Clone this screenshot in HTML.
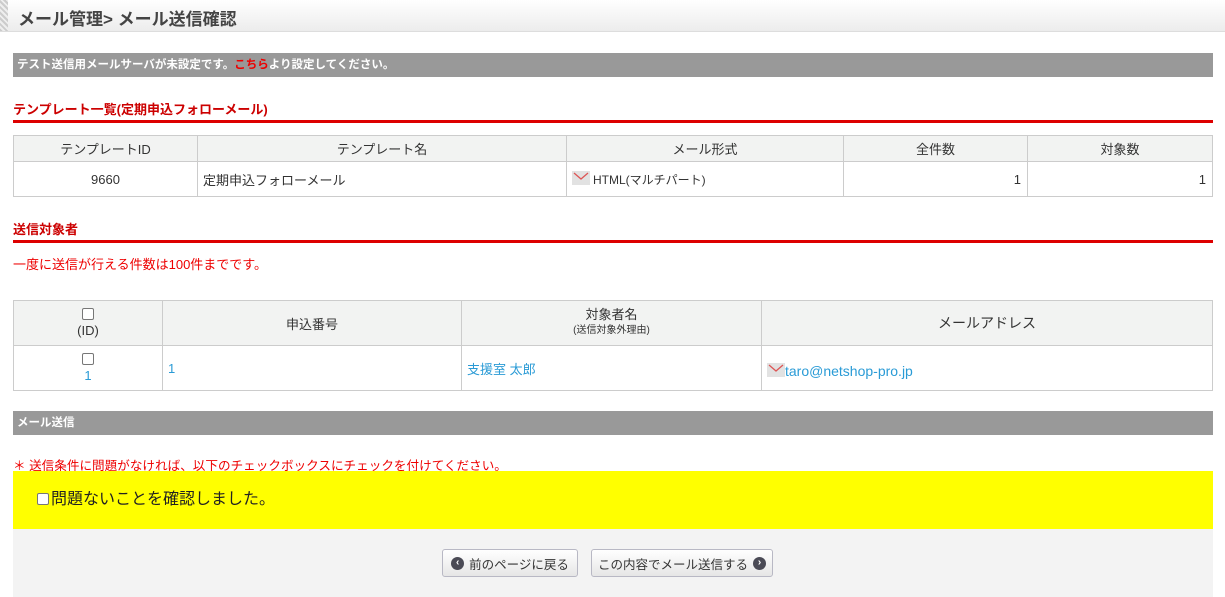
<!DOCTYPE html>
<html><head><meta charset="utf-8"><style>
*{box-sizing:border-box;margin:0;padding:0}
body{width:1225px;height:597px;overflow:hidden;background:#fff;font-family:"Liberation Sans","Noto Sans CJK JP",sans-serif;font-size:13px;color:#333;position:relative}
.hdr{position:absolute;left:0;top:0;width:1225px;height:32px;background:linear-gradient(#fff,#ececec);border-bottom:1px solid #ddd}
.hdr .strip{position:absolute;left:0;top:0;width:8px;height:31px;background:repeating-linear-gradient(45deg,#ccc 0 2px,#eee 2px 4px)}
.hdr h1{position:absolute;left:18px;top:5px;font-size:17px;font-weight:bold;color:#444;white-space:nowrap}
.bar{position:absolute;left:13px;width:1200px;height:24px;background:#999;color:#fff;font-weight:bold;font-size:11.5px;line-height:24px;padding-left:4px;white-space:nowrap}
.sec{position:absolute;left:13px;width:1200px;color:#c00;font-weight:bold;font-size:13px;border-bottom:3px solid #d00;height:24px}
table{position:absolute;left:13px;width:1200px;border-collapse:collapse}
td,th{border:1px solid #ccc;font-weight:normal;font-size:13px}
th{background:#f2f3f2;color:#333}
a{color:#2a9bd6;text-decoration:none}
.cb{display:inline-block;width:12px;height:12px;border:1px solid #777;border-radius:2px;background:#fff}
.mail{display:inline-block;width:18px;height:14px;vertical-align:-1px;margin-right:3px}
.btn{position:absolute;top:549px;height:28px;border:1px solid #b8b8c4;border-radius:3px;background:linear-gradient(#fff,#e6e6e6);font-size:12.5px;color:#333;display:flex;align-items:center;justify-content:center;gap:5px;white-space:nowrap}
.ic{display:inline-block;width:13px;height:13px;border-radius:50%;background:#4a4a55;color:#fff;font-size:10px;line-height:12px;text-align:center;font-weight:bold}
</style></head><body>
<div class="hdr"><div class="strip"></div><h1>メール管理&gt; メール送信確認</h1></div>
<div class="bar" style="top:53px">テスト送信用メールサーバが未設定です。<span style="color:#e00">こちら</span>より設定してください。</div>
<div class="sec" style="top:99px">テンプレート一覧(定期申込フォローメール)</div>
<table style="top:135px">
<tr style="height:26px"><th style="width:184px">テンプレートID</th><th style="width:369px">テンプレート名</th><th style="width:277px">メール形式</th><th style="width:184px">全件数</th><th>対象数</th></tr>
<tr style="height:35px"><td style="text-align:center">9660</td><td style="padding-left:5px">定期申込フォローメール</td><td style="padding-left:5px;font-size:12px"><svg class="mail" viewBox="0 0 18 14"><rect width="18" height="14" fill="#e2e2e2"/><path d="M2 2L9 8L16 2" stroke="#d55" stroke-width="1.3" fill="none"/></svg>HTML(マルチパート)</td><td style="text-align:right;padding-right:6px">1</td><td style="text-align:right;padding-right:6px">1</td></tr>
</table>
<div class="sec" style="top:219px">送信対象者</div>
<div style="position:absolute;left:13px;top:254px;color:#e00;font-size:13px">一度に送信が行える件数は100件までです。</div>
<table style="top:300px">
<tr style="height:45px"><th style="width:149px;line-height:15px"><span class="cb"></span><br>(ID)</th><th style="width:299px">申込番号</th><th style="width:300px;line-height:14px">対象者名<br><span style="font-size:10px">(送信対象外理由)</span></th><th style="font-size:14px">メールアドレス</th></tr>
<tr style="height:45px"><td style="text-align:center;line-height:15px"><span class="cb"></span><br><a>1</a></td><td style="padding-left:5px"><a>1</a></td><td style="padding-left:5px"><a>支援室 太郎</a></td><td style="padding-left:5px;padding-top:6px;font-size:14px"><svg class="mail" style="margin-right:0" viewBox="0 0 18 14"><rect width="18" height="14" fill="#e2e2e2"/><path d="M2 2L9 8L16 2" stroke="#d55" stroke-width="1.3" fill="none"/></svg><a>taro@netshop-pro.jp</a></td></tr>
</table>
<div class="bar" style="top:411px">メール送信</div>
<div style="position:absolute;left:13px;top:455px;color:#e00;font-size:12.6px;white-space:nowrap">＊ 送信条件に問題がなければ、以下のチェックボックスにチェックを付けてください。</div>
<div style="position:absolute;left:13px;top:471px;width:1200px;height:58px;background:#ff0;font-size:16px;color:#222;line-height:58px;padding-left:24px"><span class="cb" style="vertical-align:-1px;margin-right:2px"></span>問題ないことを確認しました。</div>
<div style="position:absolute;left:13px;top:529px;width:1200px;height:68px;background:#f3f3f3"></div>
<div class="btn" style="left:442px;width:136px"><span class="ic">‹</span>前のページに戻る</div>
<div class="btn" style="left:591px;width:182px">この内容でメール送信する<span class="ic">›</span></div>
</body></html>
